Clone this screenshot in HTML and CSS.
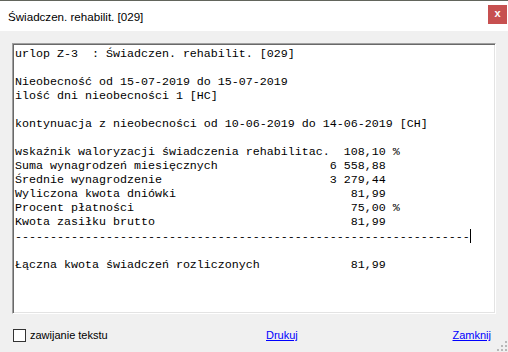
FILE: index.html
```html
<!DOCTYPE html>
<html lang="pl">
<head>
    <meta charset="UTF-8">
    <title>Świadczen. rehabilit. [029]</title>
    <link rel="stylesheet" href="styles.css">
</head>
<body>

<div class="window">
    <div class="title-bar">
        <span class="title">Świadczen. rehabilit. [029]</span>
        <span class="close-btn">x</span>
    </div>

    <div class="content">
        <div class="report"><pre>urlop Z-3  : Świadczen. rehabilit. [029]

Nieobecność od 15-07-2019 do 15-07-2019
ilość dni nieobecności 1 [HC]

kontynuacja z nieobecności od 10-06-2019 do 14-06-2019 [CH]

wskaźnik waloryzacji świadczenia rehabilitac.  108,10 %
Suma wynagrodzeń miesięcznych                6 558,88
Średnie wynagrodzenie                        3 279,44
Wyliczona kwota dniówki                         81,99
Procent płatności                               75,00 %
Kwota zasiłku brutto                            81,99
-----------------------------------------------------------------<span class="caret"></span>

Łączna kwota świadczeń rozliczonych             81,99</pre></div>
    </div>

    <div class="footer">
        <label class="wrap-opt">
            <span class="checkbox"></span>
            zawijanie tekstu
        </label>
        <a href="#" class="link">Drukuj</a>
        <span class="spacer"></span>
        <a href="#" class="link">Zamknij</a>
    </div>

    <!-- uchwyt zmiany rozmiaru -->
    <svg class="grip" width="10" height="10" viewBox="0 0 10 10">
        <rect x="8" y="0" width="2" height="2" fill="#b8b8b8"/>
        <rect x="4" y="4" width="2" height="2" fill="#b8b8b8"/>
        <rect x="8" y="4" width="2" height="2" fill="#b8b8b8"/>
        <rect x="0" y="8" width="2" height="2" fill="#b8b8b8"/>
        <rect x="4" y="8" width="2" height="2" fill="#b8b8b8"/>
        <rect x="8" y="8" width="2" height="2" fill="#b8b8b8"/>
    </svg>
</div>

</body>
</html>
```

FILE: styles.css
```css
html, body {
    margin: 0;
    padding: 0;
}
body {
    font-family: "Liberation Sans", Arial, sans-serif;
    background-color: #f0f0f0;
}
.window {
    position: relative;
    width: 508px;
    height: 352px;
    display: flex;
    flex-direction: column;
    background-color: #f0f0f0;
}
.title-bar {
    height: 30px;
    border-top: 1px solid #62655c;
    background-color: #fff;
    display: flex;
    align-items: center;
    justify-content: space-between;
}
.title {
    font-size: 11.6px;
    color: #000;
    margin-left: 8px;
}
.close-btn {
    width: 19px;
    height: 19px;
    margin-right: 1px;
    margin-top: -3px;
    background-color: #c75050; /* czerwony */
    color: #fff;
    font-size: 11px;
    font-weight: bold;
    line-height: 17px;
    text-align: center;
}
.content {
    padding: 12px 12px 0 12px;
}
.report {
    height: 269px;
    border-top: 1px solid #a0a0a0;
    border-left: 1px solid #a0a0a0;
    border-right: 1px solid #fff;
    border-bottom: 1px solid #fff;
    box-shadow: inset 1px 1px 0 #696969, inset -1px -1px 0 #e3e3e3;
    background-color: #fff;
}
.report pre {
    margin: 0;
    padding: 3px 0 0 2px;
    font-family: "Liberation Mono", "Courier New", monospace;
    font-size: 11.67px;
    line-height: 14px;
    color: #000;
}
.caret {
    display: inline-block;
    width: 1px;
    height: 14px;
    background-color: #000;
    vertical-align: -3px;
}
.footer {
    height: 38px;
    display: flex;
    align-items: center;
    padding-top: 4px;
    box-sizing: border-box;
    font-size: 11px;
}
.wrap-opt {
    display: flex;
    align-items: center;
    width: 253px;
    margin-left: 13px;
    color: #000;
}
.checkbox {
    width: 11px;
    height: 11px;
    border: 1px solid #333;
    background-color: #fff;
    margin-right: 4px;
}
.link {
    color: #0000ff;
    text-decoration: underline;
}
.spacer {
    flex: 1;
}
.footer .link:last-child {
    margin-right: 17px;
}
.grip {
    position: absolute;
    right: 1px;
    bottom: 1px;
}
```
